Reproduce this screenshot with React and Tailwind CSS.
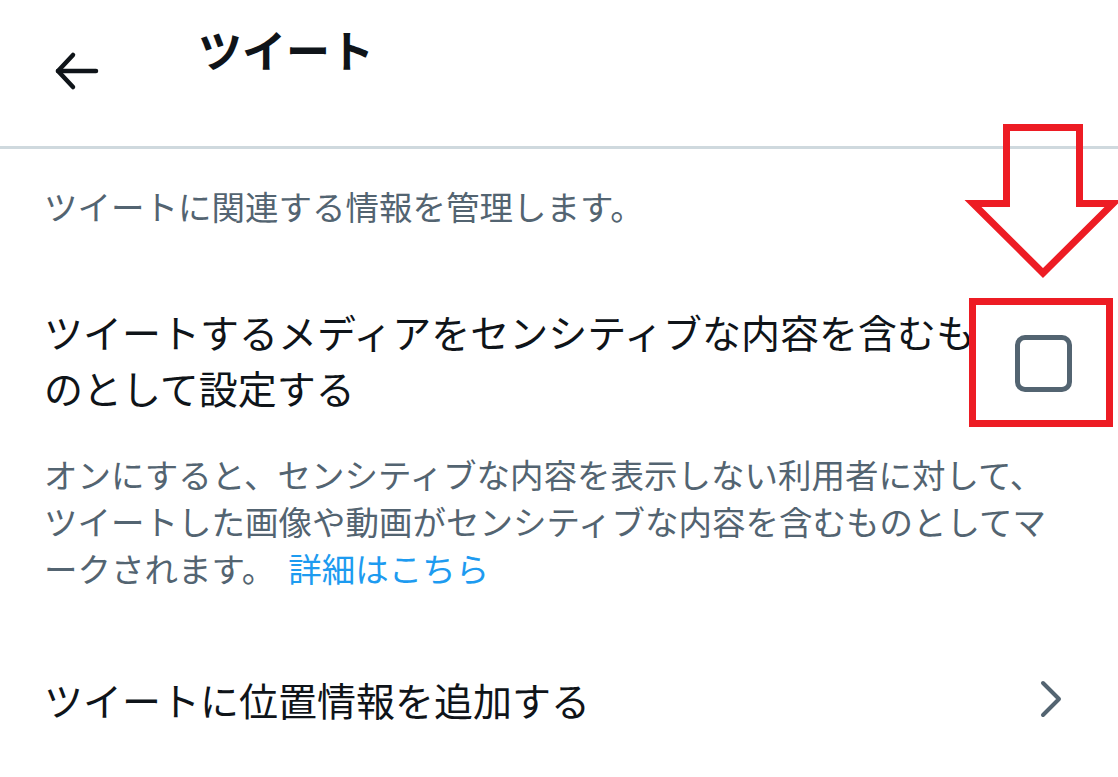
export default function App() {
  return (
    <div className="relative w-[1118px] h-[777px] overflow-hidden bg-white text-[#0f1419] font-['Noto_Sans_CJK_JP','Noto_Sans',sans-serif]">
      {/* header */}
      <div className="h-[149px] flex items-start border-b-[3px] border-[#cfd9de]">
        <button className="ml-[54px] mt-[51px]">
          <svg width="46" height="40" viewBox="0 0 46 40" fill="none" stroke="#0f1419" strokeWidth="4.5" strokeLinecap="round" strokeLinejoin="round">
            <line x1="4" y1="20" x2="42" y2="20" />
            <polyline points="19,4 4,20 19,36" />
          </svg>
        </button>
        <h1 className="ml-[98px] mt-[27px] text-[44px] font-bold leading-none">ツイート</h1>
      </div>

      <div className="px-[44px]">
        <p className="mt-[32px] text-[33.5px] leading-[50px] text-[#536471]">
          ツイートに関連する情報を管理します。
        </p>

        <div className="mt-[72px] flex items-center justify-between">
          <p className="w-[950px] text-[39px] leading-[56px]">
            ツイートするメディアをセンシティブな内容を含むものとして設定する
          </p>
          <div className="mr-[2px] mt-[8px] w-[57px] h-[57px] rounded-[10px] border-[5.5px] border-[#536471]" />
        </div>

        <p className="mt-[35px] text-[33.5px] leading-[47px] text-[#536471]">
          オンにすると、センシティブな内容を表示しない利用者に対して、ツイートした画像や動画がセンシティブな内容を含むものとしてマークされます。
          <span className="ml-[13px] text-[#1d9bf0]">詳細はこちら</span>
        </p>

        <div className="mt-[80px] flex items-center justify-between">
          <span className="text-[39px] leading-[56px]">ツイートに位置情報を追加する</span>
          <svg className="mr-[11px]" width="24" height="40" viewBox="0 0 24 40" fill="none" stroke="#536471" strokeWidth="4" strokeLinecap="round" strokeLinejoin="round">
            <polyline points="4,4 20,20 4,36" />
          </svg>
        </div>
      </div>

      {/* red annotation */}
      <svg className="absolute left-0 top-0 pointer-events-none" width="1118" height="777" viewBox="0 0 1118 777" fill="none" stroke="#ed1c24" strokeWidth="7">
        <polygon points="1006.5,127.5 1079.5,127.5 1079.5,203.5 1113,203.5 1043,273 973,203.5 1006.5,203.5" strokeLinejoin="miter" />
        <rect x="972.5" y="301.5" width="137" height="122" />
      </svg>
    </div>
  );
}
